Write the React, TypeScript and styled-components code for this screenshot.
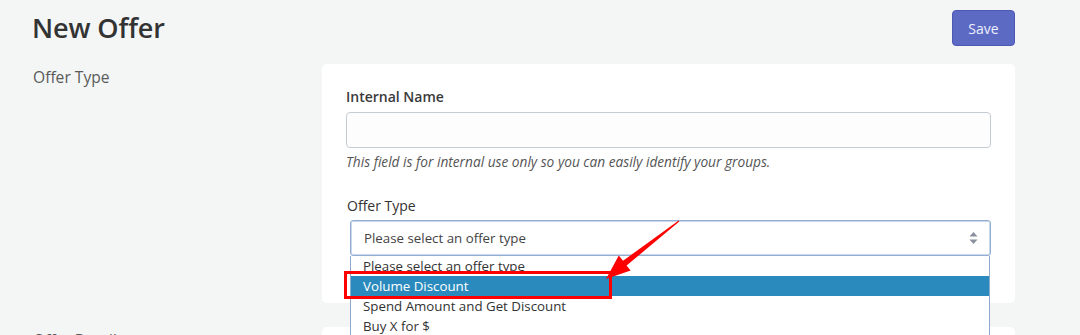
import React from "react";
import styled, { createGlobalStyle } from "styled-components";

const Global = createGlobalStyle`
  html, body { margin: 0; padding: 0; }
  body {
    background: #f4f6f6;
    font-family: "Open Sans", "Noto Sans", sans-serif;
    color: #333;
    overflow: hidden;
  }
`;

const Page = styled.div`
  padding: 10px 65px 0 34px;
  width: 1080px;
  box-sizing: border-box;
  height: 335px;
  overflow: hidden;
`;

const Header = styled.div`
  display: flex;
  align-items: center;
  justify-content: space-between;
  height: 36px;
  margin-bottom: 18px;
`;

const Title = styled.h1`
  margin: 0 0 0 -2px;
  font-size: 27px;
  font-weight: 600;
  color: #333;
  letter-spacing: -0.1px;
  line-height: 36px;
`;

const SaveButton = styled.button`
  width: 63px;
  height: 36px;
  border-radius: 4px;
  border: 1px solid #4b59b5;
  background: #5c6ac4;
  color: #eef0fb;
  font-family: "Open Sans", "Noto Sans", sans-serif;
  font-size: 14px;
  cursor: pointer;
  padding: 0;
`;

const Section = styled.section`
  display: grid;
  grid-template-columns: 288px 1fr;
  margin-bottom: 24px;
`;

const SectionLabel = styled.div`
  font-size: 15.6px;
  color: #5a5a5a;
  padding-top: 2px;
  margin-left: -1px;
`;

const Card = styled.div<{ $height?: number }>`
  background: #fff;
  border-radius: 5px;
  padding: 23px 24px 24px 24px;
  box-sizing: border-box;
  min-height: ${(p) => (p.$height ? `${p.$height}px` : "auto")};
`;

const Field = styled.div<{ $gap?: number }>`
  display: flex;
  flex-direction: column;
  margin-bottom: ${(p) => p.$gap ?? 0}px;
`;

const Label = styled.label`
  font-size: 14px;
  font-weight: 600;
  color: #3a3a3a;
  line-height: 20px;
  margin-bottom: 5px;
`;

const PlainLabel = styled(Label)`
  font-weight: 400;
  color: #333;
  margin-left: 1px;
  margin-bottom: 4px;
`;

const TextInput = styled.input`
  height: 36px;
  box-sizing: border-box;
  border: 1px solid #c4cdd5;
  border-radius: 4px;
  background: #fdfdfd;
  font-size: 14px;
  padding: 0 12px;
`;

const Help = styled.div`
  font-size: 13.7px;
  font-style: italic;
  color: #555;
  margin-top: 5px;
  line-height: 18px;
`;

const SelectWrap = styled.div`
  position: relative;
  margin-left: 4px;
`;

const SelectBox = styled.div`
  height: 36px;
  box-sizing: border-box;
  border: 1px solid #93aed3;
  box-shadow: inset 0 0 0 1px #c9d7ea;
  border-radius: 3px;
  display: flex;
  align-items: center;
  justify-content: space-between;
  padding: 0 12px 0 13px;
  font-size: 13.3px;
  color: #444;
  background: #fff;
`;

const Arrows = styled.svg`
  width: 9px;
  height: 12px;
`;

const OptionList = styled.ul`
  position: absolute;
  left: 0;
  right: 1px;
  top: 36px;
  margin: 0;
  padding: 0;
  list-style: none;
  background: #fff;
  border-left: 1px solid #8fa9cc;
  border-right: 1px solid #8fa9cc;
  z-index: 2;
`;

const Option = styled.li<{ $active?: boolean }>`
  height: 20px;
  line-height: 20px;
  font-size: 13.3px;
  padding-left: 12px;
  background: ${(p) => (p.$active ? "#2a8abd" : "#fff")};
  color: ${(p) => (p.$active ? "#fff" : "#333")};
`;

const Highlight = styled.div`
  position: absolute;
  left: -6px;
  top: 51px;
  width: 262px;
  height: 22px;
  border: 3px solid #ff0000;
  z-index: 3;
  pointer-events: none;
`;

const ArrowMark = styled.svg`
  position: absolute;
  left: 250px;
  top: -5px;
  width: 90px;
  height: 70px;
  z-index: 4;
  overflow: visible;
`;

export default function App() {
  const options = [
    "Please select an offer type",
    "Volume Discount",
    "Spend Amount and Get Discount",
    "Buy X for $",
  ];
  return (
    <>
      <Global />
      <Page>
        <Header>
          <Title>New Offer</Title>
          <SaveButton>Save</SaveButton>
        </Header>
        <Section>
          <SectionLabel>Offer Type</SectionLabel>
          <Card $height={239}>
            <Field $gap={25}>
              <Label>Internal Name</Label>
              <TextInput />
              <Help>This field is for internal use only so you can easily identify your groups.</Help>
            </Field>
            <Field>
              <PlainLabel>Offer Type</PlainLabel>
              <SelectWrap>
                <SelectBox>
                  <span>Please select an offer type</span>
                  <Arrows viewBox="0 0 9 12">
                    <path d="M4.5 0 L8.5 4.5 L0.5 4.5 Z" fill="#8a8f9e" />
                    <path d="M4.5 12 L8.5 7.5 L0.5 7.5 Z" fill="#8a8f9e" />
                  </Arrows>
                </SelectBox>
                <OptionList>
                  {options.map((o, i) => (
                    <Option key={o} $active={i === 1}>
                      {o}
                    </Option>
                  ))}
                </OptionList>
                <Highlight />
                <ArrowMark viewBox="600 215 90 70">
                  <polygon
                    points="679.3,221.4 626.6,265.6 630.6,270.6 606,279 618.8,255.6 623,260.8 678.7,220.6"
                    fill="#ff0000"
                  />
                </ArrowMark>
              </SelectWrap>
            </Field>
          </Card>
        </Section>
        <Section>
          <SectionLabel>Offer Details</SectionLabel>
          <Card $height={200} />
        </Section>
      </Page>
    </>
  );
}
